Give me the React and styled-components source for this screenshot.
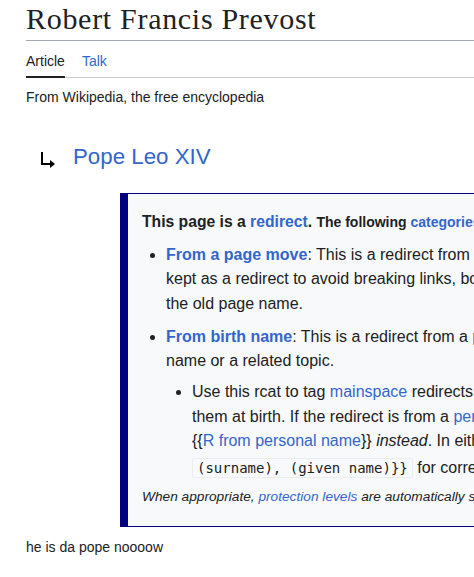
import React from 'react'
import styled, { createGlobalStyle } from 'styled-components'

const GlobalStyle = createGlobalStyle`
  html, body {
    margin: 0;
    padding: 0;
    background: #fff;
    overflow: hidden;
  }

  body {
    font-family: 'Liberation Sans', Arial, sans-serif;
    color: #202122;
  }
`

const Page = styled.main`
  padding-left: 26px;
  width: 900px;
`

const Title = styled.h1`
  margin: 0;
  font-family: 'Liberation Serif', 'Times New Roman', serif;
  font-weight: 400;
  font-size: 30px;
  letter-spacing: 0.7px;
  line-height: 38px;
  padding-bottom: 2px;
  border-bottom: 1px solid #a2a9b1;
`

const TabBar = styled.nav`
  display: flex;
  gap: 17px;
  border-bottom: 1px solid #c8ccd1;
`

const Tab = styled.a`
  padding: 10px 0 5px;
  margin-bottom: -1px;
  font-size: 14px;
  line-height: 20px;
  text-decoration: none;
  color: ${(p) => (p.$active ? '#202122' : '#3366cc')};
  border-bottom: 2px solid ${(p) => (p.$active ? '#202122' : 'transparent')};
`

const Tagline = styled.div`
  margin-top: 9px;
  font-size: 14px;
  line-height: 20px;
`

const RedirectRow = styled.div`
  display: flex;
  align-items: center;
  margin-top: 35px;
  padding-left: 14px;
`

const RedirectIcon = styled.svg`
  flex: none;
  width: 16px;
  height: 16px;
  margin: 6px 17px 0 0;
`

const RedirectTarget = styled.a`
  font-size: 22.3px;
  line-height: 30px;
  color: #3366cc;
  text-decoration: none;
`

const A = styled.a`
  color: #3366cc;
  text-decoration: none;
`

const RcatBox = styled.div`
  margin: 21px 0 0 94px;
  padding: 16px 14px 18px;
  background: #f8f9fa;
  border: 1px solid #000080;
  border-left-width: 8px;
  white-space: nowrap;
`

const Header = styled.div`
  font-size: 15.7px;
  font-weight: 700;
  line-height: 24px;
`

const Small = styled.span`
  font-size: 14px;
`

const List = styled.ul`
  margin: ${(p) => (p.$nested ? '7px 0 0' : '9px 0 0')};
  padding-left: ${(p) => (p.$nested ? '26px' : '24px')};
  list-style: disc;
  font-size: 16px;
  line-height: 24.4px;
`

const Item = styled.li`
  & + & {
    margin-top: 8.4px;
  }
`

const Line = styled.div`
  margin-top: ${(p) => (p.$code ? '2.8px' : '0')};
`

const Strong = styled(A)`
  font-weight: 700;
`

const Code = styled.code`
  font-family: 'DejaVu Sans Mono', 'Liberation Mono', monospace;
  font-size: 14px;
  padding: 1px 4px;
  background: #f8f9fa;
  border: 1px solid #eaecf0;
  border-radius: 2px;
`

const Footnote = styled.div`
  margin-top: 5px;
  font-size: 13.7px;
  font-style: italic;
  line-height: 22px;
`

const Body = styled.p`
  margin: 10px 0 0;
  font-size: 14px;
  line-height: 20px;
`

export default function App() {
  return (
    <>
      <GlobalStyle />
      <Page>
        <Title>Robert Francis Prevost</Title>
        <TabBar>
          <Tab $active>Article</Tab>
          <Tab>Talk</Tab>
        </TabBar>
        <Tagline>From Wikipedia, the free encyclopedia</Tagline>

        <RedirectRow>
          <RedirectIcon viewBox="0 0 16 16">
            <path d="M2 0 V12 H11" fill="none" stroke="#000" strokeWidth="2" />
            <polygon points="10,8 15,12 10,16" fill="#000" />
          </RedirectIcon>
          <RedirectTarget>Pope Leo XIV</RedirectTarget>
        </RedirectRow>

        <RcatBox>
          <Header>
            This page is a <A>redirect</A>.{' '}
            <Small>
              The following <A>categories</A> are used to track and monitor this redirect:
            </Small>
          </Header>
          <List>
            <Item>
              <Line>
                <Strong>From a page move</Strong>: This is a redirect from a page that has been moved
                (renamed). This page was
              </Line>
              <Line>
                kept as a redirect to avoid breaking links, both internal and external, that may have
                been made to
              </Line>
              <Line>the old page name.</Line>
            </Item>
            <Item>
              <Line>
                <Strong>From birth name</Strong>: This is a redirect from a person's birth name to a more
                common
              </Line>
              <Line>name or a related topic.</Line>
              <List $nested>
                <Item>
                  <Line>
                    Use this rcat to tag <A>mainspace</A> redirects to the birth name of a person whose
                    name differs from
                  </Line>
                  <Line>
                    them at birth. If the redirect is from a <A>personal name</A>, use
                  </Line>
                  <Line>
                    {'{{'}
                    <A>R from personal name</A>
                    {'}}'} <i>instead</i>. In either case, use {'{{DEFAULTSORT:'}
                  </Line>
                  <Line $code>
                    <Code>(surname), (given name){'}}'}</Code> for correct sorting.
                  </Line>
                </Item>
              </List>
            </Item>
          </List>
          <Footnote>
            When appropriate, <A>protection levels</A> are automatically sensed, described and
            categorized.
          </Footnote>
        </RcatBox>

        <Body>he is da pope noooow</Body>
      </Page>
    </>
  )
}
